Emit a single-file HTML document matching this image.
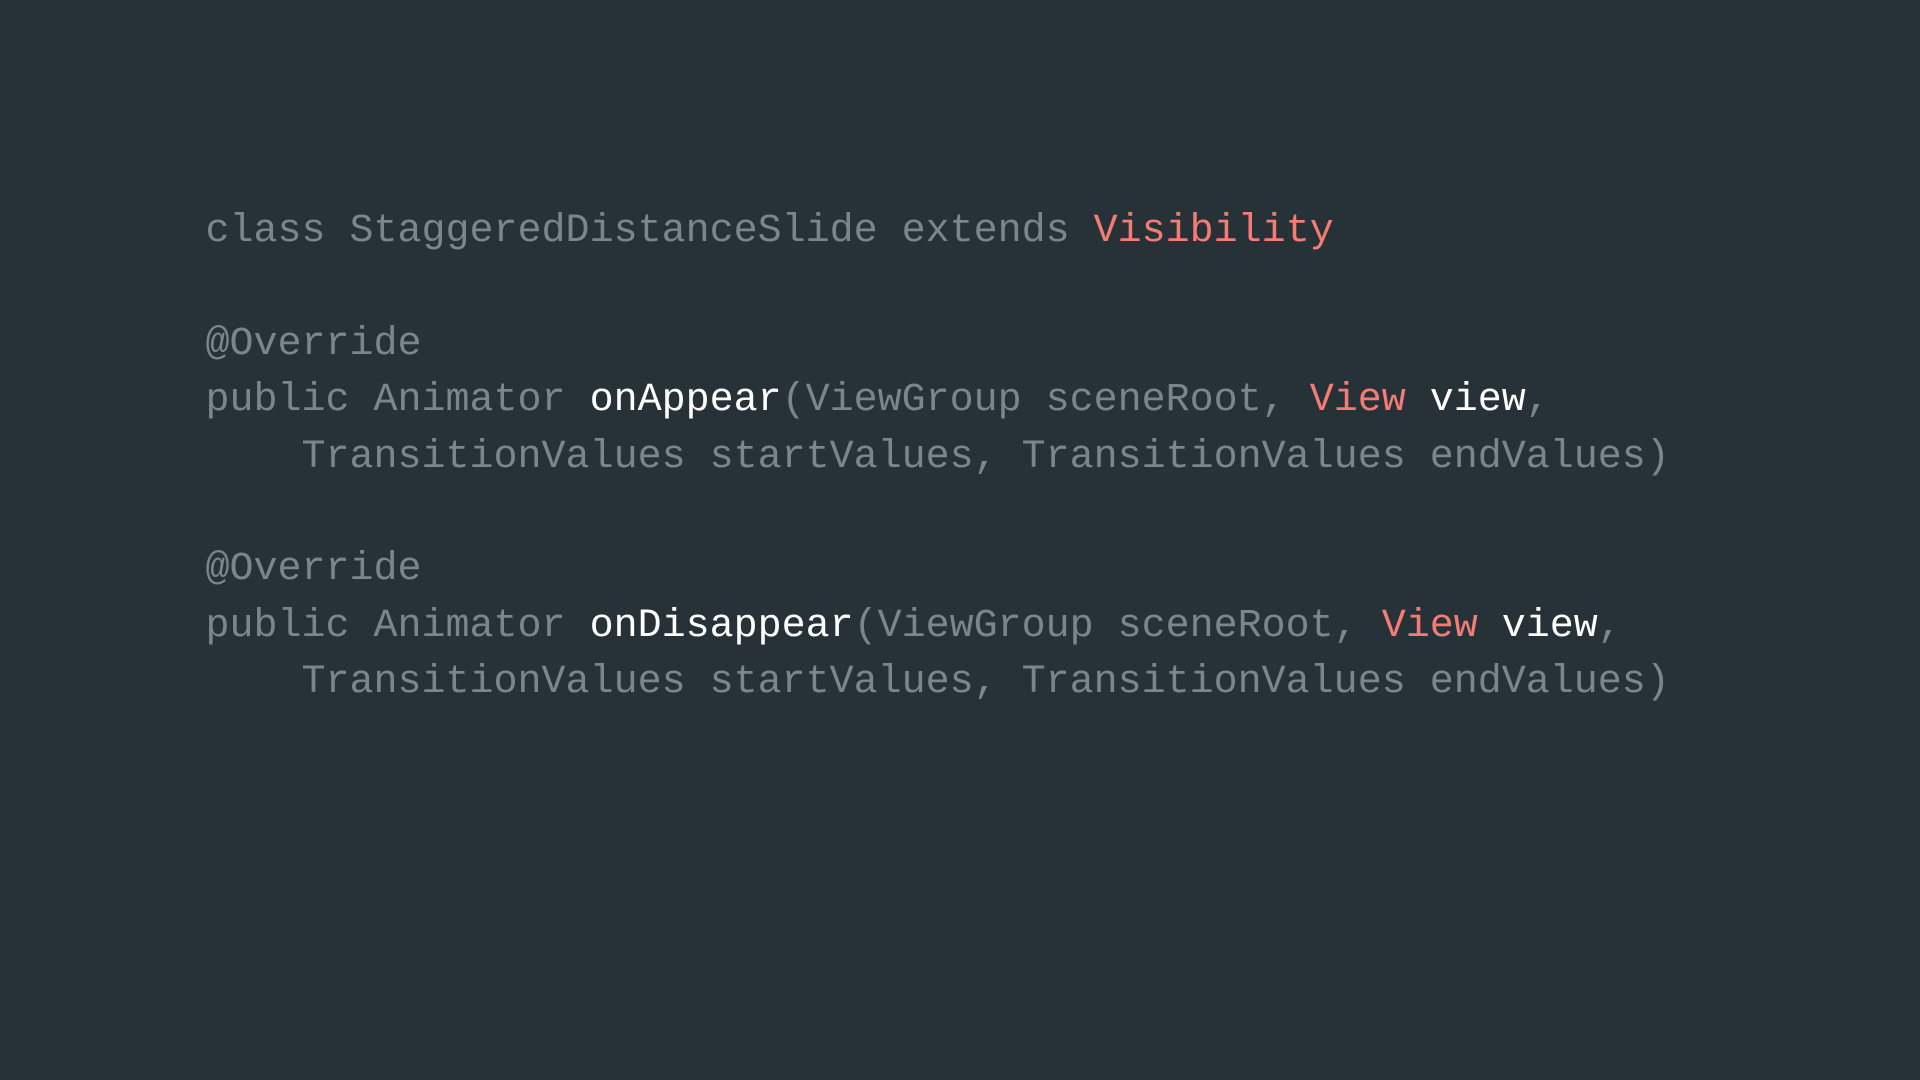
<!DOCTYPE html>
<html><head><meta charset="utf-8"><style>
html,body{margin:0;padding:0;background:#263238;width:1920px;height:1080px;overflow:hidden}
pre{position:absolute;left:205.5px;top:204px;margin:0;font-family:"Liberation Mono",monospace;font-size:40px;line-height:56.4px;color:#7b858b;letter-spacing:0}
.r{color:#f47c72}.w{color:#ffffff}
</style></head><body>
<pre>class StaggeredDistanceSlide extends <span class="r">Visibility</span>

@Override
public Animator <span class="w">onAppear</span>(ViewGroup sceneRoot, <span class="r">View</span> <span class="w">view</span>,
    TransitionValues startValues, TransitionValues endValues)

@Override
public Animator <span class="w">onDisappear</span>(ViewGroup sceneRoot, <span class="r">View</span> <span class="w">view</span>,
    TransitionValues startValues, TransitionValues endValues)</pre>
</body></html>
